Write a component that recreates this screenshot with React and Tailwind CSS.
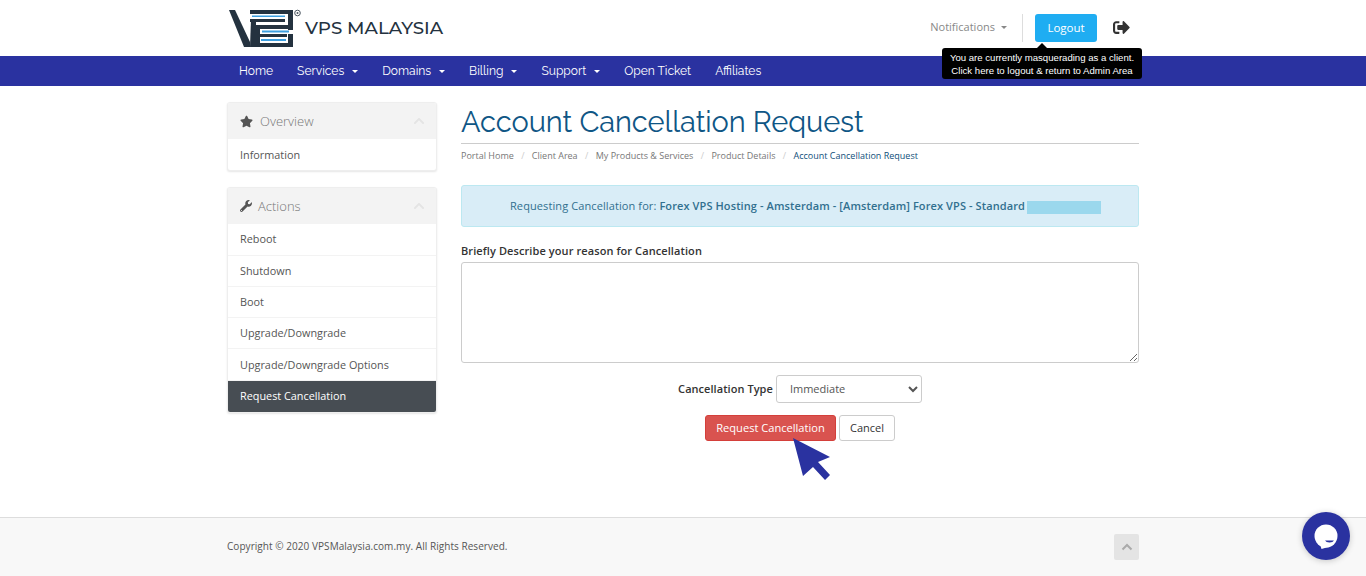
import React from "react";
import { FaStar, FaWrench, FaSignOutAlt, FaChevronUp } from "react-icons/fa";

const Caret = ({ className = "" }) => (
  <span className={`inline-block w-0 h-0 border-x-[3px] border-x-transparent border-t-[3px] border-t-current ${className}`} />
);

const Logo = () => (
  <svg width="76" height="48" viewBox="228 4 76 48" className="block">
    <g fill="#24323f">
      <path d="M229 10 H235 L250 42 V47 H244 Z" />
      <path d="M250 47 H256 V19 H251 Z" />
      <rect x="250" y="10" width="43" height="4" />
      <rect x="250" y="19" width="35" height="3" />
      <rect x="288" y="10" width="5" height="20" />
      <rect x="256" y="25" width="37" height="4" />
      <rect x="256" y="25" width="4" height="22" />
      <rect x="256" y="34" width="31" height="3" />
      <rect x="288" y="34" width="5" height="13" />
      <rect x="256" y="43" width="37" height="4" />
    </g>
    <rect x="252" y="15.500" width="33" height="1.500" fill="#3d9fe0" />
    <rect x="262" y="30.500" width="27" height="2" fill="#3d9fe0" />
    <rect x="261" y="39" width="25" height="2" fill="#3d9fe0" />
    <circle cx="297.500" cy="13" r="2.800" fill="none" stroke="#4a5560" strokeWidth="1" />
    <circle cx="297.500" cy="13" r="1" fill="#4a5560" />
  </svg>
);

const NavItem = ({ label, caret, className = "" }) => (
  <span className={`flex items-center text-[12.050px] font-normal text-white h-full px-[12px] ${className}`}>
    {label}
    {caret && <Caret className="ml-[8px]" />}
  </span>
);

const Panel = ({ icon, title, children, iconWidth = "w-[20px]" }) => (
  <div className="w-[210px] rounded-[3px] bg-white border border-[#eee] shadow-[0_1px_2px_rgba(0,0,0,0.1)] overflow-hidden">
    <div className="h-[36px] bg-[#f3f3f3] flex items-center pl-[12px] pr-[11px] text-[#777]">
      <span className={`text-[#555] text-[13px] ${iconWidth}`}>{icon}</span>
      <span className="text-[13px] font-light mt-[1px]">{title}</span>
      <FaChevronUp className="ml-auto text-[#e4e4e4] text-[12px]" />
    </div>
    {children}
  </div>
);

const Row = ({ children, active, last }) => (
  <div className={`h-[31.300px] flex items-center pl-[12px] text-[10.850px] ${active ? "bg-[#474d53] text-white" : "text-[#555]"} ${last || active ? "" : "border-b border-[#f3f3f3]"}`}>
    {children}
  </div>
);

const Crumb = ({ children }) => (
  <>
    <span className="text-[#777]">{children}</span>
    <span className="text-[#ccc] px-[7.400px]">/</span>
  </>
);

export default function App() {
  return (
    <div className="relative w-[1366px] h-[576px] overflow-hidden bg-white font-['Open_Sans',sans-serif] text-[#333]">
      <header className="h-[56px] bg-white flex items-center pl-[228px] pr-[236px]">
        <div className="flex items-center">
          <Logo />
          <span className="ml-[1px] mt-[1px] origin-left scale-x-[1.14] font-['Montserrat','Inter',sans-serif] text-[16px] font-medium text-[#24323f]">VPS MALAYSIA</span>
        </div>
        <div className="ml-auto flex items-center text-[#888]">
          <span className="text-[11px] flex items-center -mt-[2px]">Notifications<Caret className="ml-[6px]" /></span>
          <span className="w-px h-[28px] bg-[#ddd] ml-[15px] mr-[12px]" />
          <span className="w-[62px] h-[28px] bg-[#1fadf2] rounded-[3px] text-white text-[11.500px] font-medium flex items-center justify-center">Logout</span>
          <FaSignOutAlt className="ml-[16px] text-[#333] text-[17px] -mt-[2px]" />
        </div>
      </header>

      <nav className="h-[30px] bg-[#2a32a0] flex pl-[227px] font-['Raleway','Roboto',sans-serif]">
        <NavItem label="Home" />
        <NavItem label="Services" caret />
        <NavItem label="Domains" caret />
        <NavItem label="Billing" caret />
        <NavItem label="Support" caret />
        <NavItem label="Open Ticket" />
        <NavItem label="Affiliates" />
      </nav>

      <div className="absolute left-[942px] top-[48px] w-[200px] h-[31px] bg-black rounded-[3px] text-white text-[9.600px] leading-[13px] text-center flex flex-col justify-center font-['Liberation_Sans',sans-serif]">
        <span className="absolute left-1/2 -top-[5px] -ml-[5px] w-0 h-0 border-x-[5px] border-x-transparent border-b-[5px] border-b-black" />
        <div>You are currently masquerading as a client.</div>
        <div>Click here to logout &amp; return to Admin Area</div>
      </div>

      <main className="flex pl-[227px] pt-[16px] gap-[24px] h-[431px]">
        <aside className="flex flex-col gap-[16px]">
          <Panel icon={<FaStar />} title="Overview">
            <Row last>Information</Row>
          </Panel>
          <Panel icon={<FaWrench className="text-[12px]" />} title="Actions" iconWidth="w-[18px]">
            <Row>Reboot</Row>
            <Row>Shutdown</Row>
            <Row>Boot</Row>
            <Row>Upgrade/Downgrade</Row>
            <Row>Upgrade/Downgrade Options</Row>
            <Row active>Request Cancellation</Row>
          </Panel>
        </aside>

        <section className="w-[678px]">
          <h1 className="text-[#0f5685] text-[29px] leading-[40px] tracking-[-0.08px] font-['Raleway','Lato',sans-serif] pb-[1px] border-b border-[#ccc]">Account Cancellation Request</h1>
          <div className="text-[9px] leading-[12px] mt-[6px] flex">
            <Crumb>Portal Home</Crumb>
            <Crumb>Client Area</Crumb>
            <Crumb>My Products &amp; Services</Crumb>
            <Crumb>Product Details</Crumb>
            <span className="text-[#0f4f7a]">Account Cancellation Request</span>
          </div>

          <div className="mt-[23px] h-[42px] pl-[11px] bg-[#d9edf7] border border-[#bce8f1] rounded-[3px] flex items-center justify-center text-[11px] text-[#31708f]">
            <span className="tracking-[0.1px]">Requesting Cancellation for:&nbsp;</span>
            <strong className="font-semibold tracking-[0.1px]">Forex VPS Hosting - Amsterdam - [Amsterdam] Forex VPS - Standard</strong>
            <span className="w-[74px] h-[13px] bg-[#9bd8ed] ml-[2px] mt-[2px]" />
          </div>

          <label className="block mt-[16px] text-[11px] font-semibold leading-[15px] tracking-[0.09px] text-[#333]">Briefly Describe your reason for Cancellation</label>
          <textarea className="block w-full h-[101px] mt-[4px] border border-[#ccc] rounded-[3px] bg-white outline-none" />

          <div className="flex items-center justify-center mt-[12px] text-[11px]">
            <span className="font-semibold text-[#333] mr-[3px] tracking-[0.05px]">Cancellation Type</span>
            <select defaultValue="Immediate" className="w-[146px] h-[28px] pb-[2px] border border-[#ccc] rounded-[3px] bg-white text-[#555] text-[11px] pl-[9px] outline-none">
              <option>Immediate</option>
            </select>
          </div>
          <div className="flex justify-center mt-[12px] gap-[3px] text-[11px]">
            <span className="w-[131px] h-[26px] bg-[#d9534f] border border-[#d43f3a] rounded-[3px] text-white text-[11.100px] flex items-center justify-center">Request Cancellation</span>
            <span className="w-[56px] h-[26px] bg-white border border-[#ccc] rounded-[3px] text-[#333] flex items-center justify-center">Cancel</span>
          </div>
        </section>
      </main>

      <svg className="absolute left-[793px] top-[438px]" width="40" height="44" viewBox="0 0 40 44">
        <path d="M0 0 L37 19 L25 24 L37 37 L32 42 L20 29 L10 38 Z" fill="#2a32a0" />
      </svg>

      <footer className="h-[59px] bg-[#f8f8f8] border-t border-[#ddd] flex items-center pl-[227px] pr-[227px] text-[10px] text-[#555] tracking-[0.05px]">
        <span className="-mt-[1px]">Copyright © 2020 VPSMalaysia.com.my. All Rights Reserved.</span>
        <span className="ml-auto w-[25px] h-[26px] bg-[#e4e4e4] rounded-[2px] flex items-center justify-center">
          <svg width="12" height="8" viewBox="0 0 12 8"><path d="M1.500 6.500 L6 2 L10.500 6.500" fill="none" stroke="#aaa" strokeWidth="2" /></svg>
        </span>
      </footer>

      <div className="absolute left-[1302px] top-[512px] w-[48px] h-[48px] rounded-full bg-[#2a32a0] shadow-[0_1px_6px_rgba(0,0,0,0.2)] flex items-center justify-center">
        <svg width="24" height="26" viewBox="0 0 24 26" className="mt-[1px]">
          <circle cx="12" cy="12" r="11.500" fill="#fff" />
          <path d="M6 20 L7.500 25 L16 22.500 Z" fill="#fff" />
          <path d="M11 16.500 H20 Q19 18.500 15.500 18.500 Q12 18.500 11 16.500 Z" fill="#2a32a0" />
        </svg>
      </div>
    </div>
  );
}
